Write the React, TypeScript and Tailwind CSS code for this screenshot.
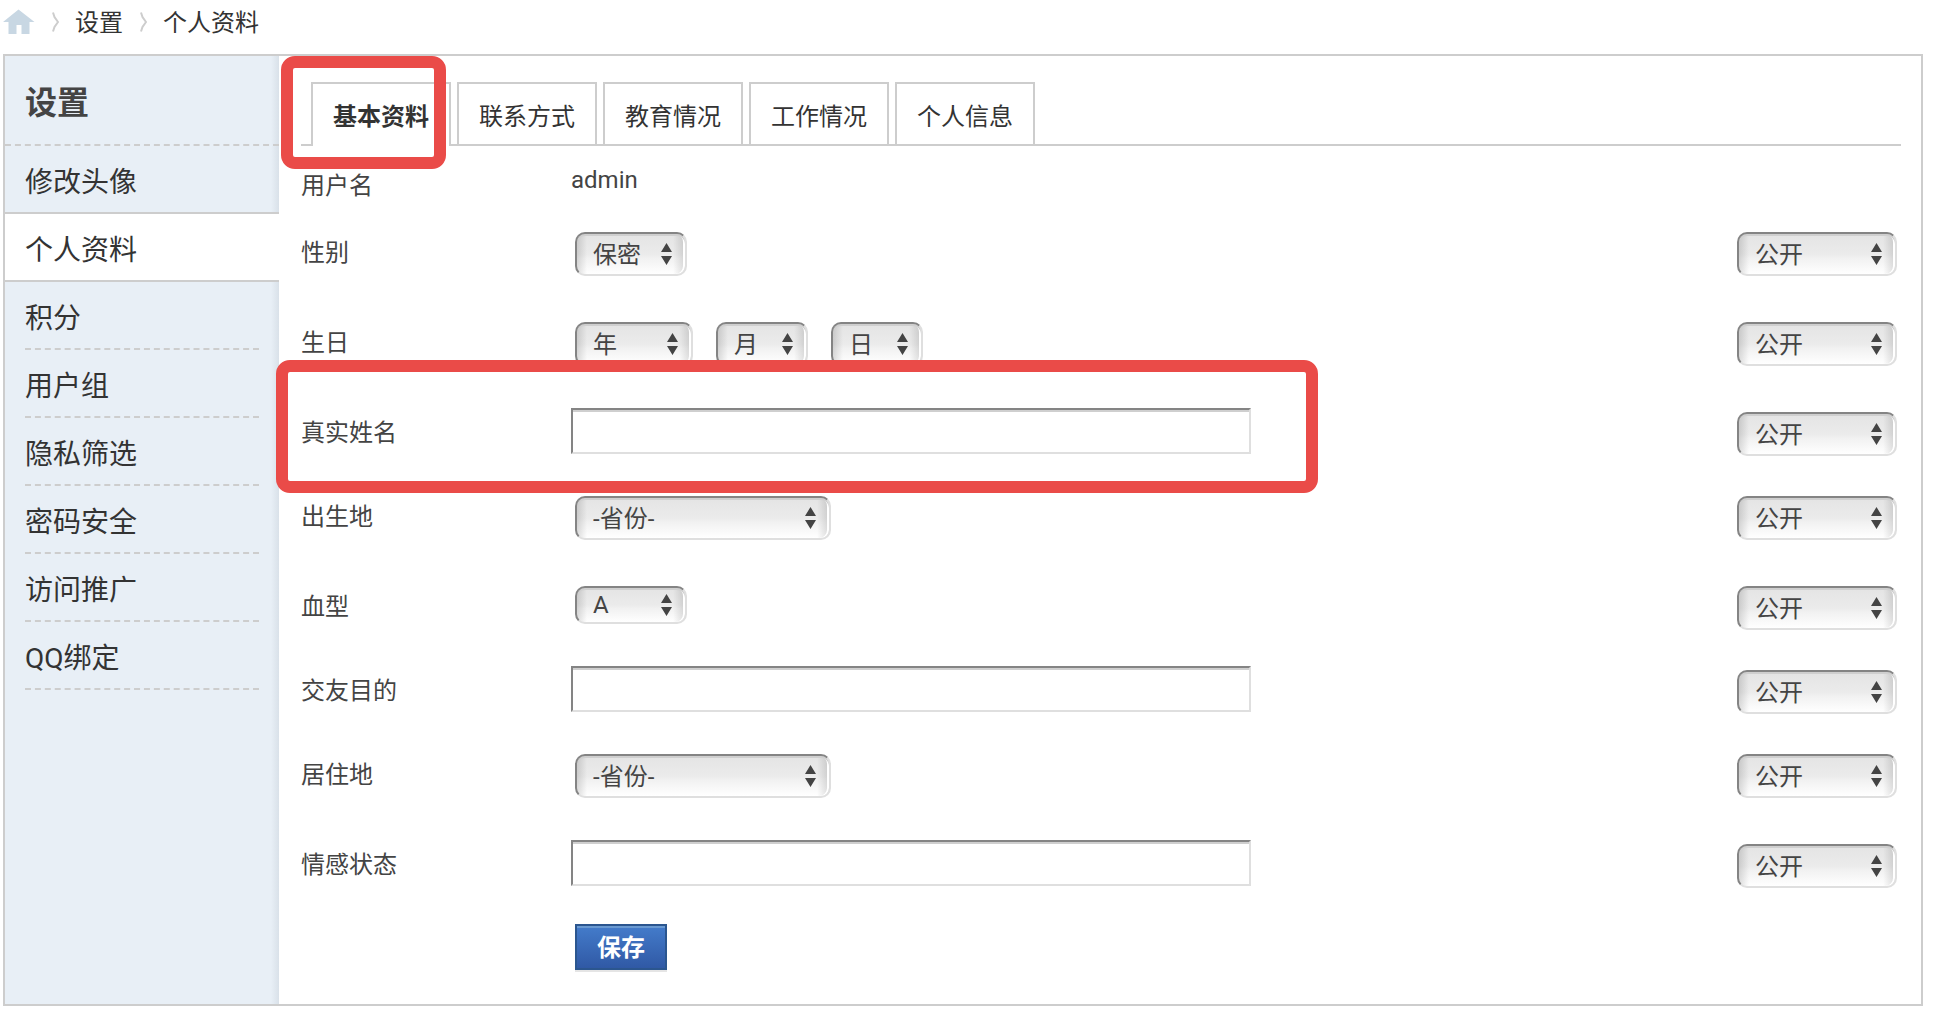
import { ReactElement } from "react"
import clsx from "clsx"

type Row = {
    id: string
    label: string
    tall?: boolean
    highlight?: boolean
    control: ReactElement
}

const menu = ["修改头像", "个人资料", "积分", "用户组", "隐私筛选", "密码安全", "访问推广", "QQ绑定"]
const activeMenu = 1

const tabs = ["基本资料", "联系方式", "教育情况", "工作情况", "个人信息"]

const rows: Row[] = [
    {
        id: "gender",
        label: "性别",
        tall: true,
        control: <Select id="gender" className="w-28" options={["保密", "男", "女"]} />
    },
    {
        id: "birthyear",
        label: "生日",
        tall: true,
        control: (
            <div className="flex gap-[23px]">
                <Select id="birthyear" className="w-[118px]" options={["年"]} />
                <Select id="birthmonth" ariaLabel="月" className="w-[92px]" options={["月"]} />
                <Select id="birthday" ariaLabel="日" className="w-[92px]" options={["日"]} />
            </div>
        )
    },
    { id: "realname", label: "真实姓名", highlight: true, control: <TextInput id="realname" /> },
    {
        id: "birthcity",
        label: "出生地",
        tall: true,
        control: <Select id="birthcity" className="w-64" options={["-省份-"]} />
    },
    {
        id: "bloodtype",
        label: "血型",
        control: <Select id="bloodtype" className="w-28" short options={["A", "B", "AB", "O"]} />
    },
    { id: "lookingfor", label: "交友目的", control: <TextInput id="lookingfor" /> },
    {
        id: "residecity",
        label: "居住地",
        tall: true,
        control: <Select id="residecity" className="w-64" options={["-省份-"]} />
    },
    { id: "affectivestatus", label: "情感状态", control: <TextInput id="affectivestatus" /> }
]

function Select({
    id,
    options,
    className,
    ariaLabel,
    short
}: {
    id: string
    options: string[]
    className: string
    ariaLabel?: string
    short?: boolean
}) {
    return (
        <div className={clsx("relative", className)}>
            <select
                id={id}
                aria-label={ariaLabel}
                className={clsx(
                    "block w-full appearance-none rounded-[10px] border-2 border-t-[#848484] border-l-[#848484] border-r-[#dfdfdf] border-b-[#dfdfdf] pl-4 text-2xl text-[#444] shadow-[inset_0_2px_0_#cfcfcf,inset_-2px_0_0_#fff]",
                    "bg-[linear-gradient(90deg,rgba(0,0,0,0.13),transparent_10px,transparent_calc(100%-12px),rgba(0,0,0,0.13)),linear-gradient(#e4e4e4,#ebebeb_50%,#f1f1f1_60%,#fff)]",
                    short ? "h-[38px]" : "h-11 pt-0.5"
                )}
            >
                {options.map(option => <option key={option}>{option}</option>)}
            </select>
            <svg
                viewBox="0 0 11 22"
                className={clsx("pointer-events-none absolute right-[15px] h-[22px] w-[11px]", short ? "top-2" : "top-[11px]")}
                fill="#444"
            >
                <path d="M5.5 0 11 9H0zM0 13h11L5.5 22z" />
            </svg>
        </div>
    )
}

function TextInput({ id }: { id: string }) {
    return (
        <input
            id={id}
            type="text"
            className="block h-[46px] w-[680px] border-2 border-t-[#848484] border-l-[#848484] border-r-[#dfdfdf] border-b-[#dfdfdf] bg-white px-2 text-2xl shadow-[inset_0_2px_0_#cfcfcf]"
        />
    )
}

function Marker({ className }: { className: string }) {
    return <div className={clsx("pointer-events-none absolute z-10 rounded-[14px] border-12 border-[#ea4b48]", className)} />
}

function Chevron() {
    return (
        <svg viewBox="0 0 8 20" className="h-5 w-2" fill="none" stroke="#cdcdcd" strokeWidth="2">
            <path d="M2 0.5 3.5 5 7 10 3.5 15 2 19.5" />
        </svg>
    )
}

function Breadcrumb() {
    return (
        <nav className="flex h-[54px] items-start gap-4 pt-1 text-[#333]">
            <a href="#" aria-label="首页" className="pt-[5px]">
                <svg viewBox="0 0 32 25" className="h-[25px] w-8" fill="#c8d7e3">
                    <path d="M15.500 0.500 31.500 13H26.500V25H18.500V16H13.500V25H5.500V13H0z" />
                </svg>
            </a>
            <span className="pt-2"><Chevron /></span>
            <a href="#" className="leading-[38px]">设置</a>
            <span className="pt-2"><Chevron /></span>
            <a href="#" className="leading-[38px]">个人资料</a>
        </nav>
    )
}

function Sidebar() {
    return (
        <aside className="w-[274px] shrink-0 bg-[#e8eff6] bg-[linear-gradient(90deg,transparent_calc(100%-8px),#d9e1e9)]">
            <h2 className="h-[90px] border-b-2 border-dashed border-[#cdcdcd] pl-5 text-[32px] leading-[94px] font-bold text-[#444]">
                设置
            </h2>
            <ul className="text-[28px] leading-[74px] text-[#333]">
                {menu.map((item, i) =>
                    <li
                        key={item}
                        className={clsx(
                            "h-[68px] border-b-2 border-[#cdcdcd]",
                            i === activeMenu && "bg-white pl-5",
                            i === activeMenu - 1 && "pl-5",
                            i > activeMenu && "mx-5 border-dashed"
                        )}
                    >
                        <a href="#" className="block">{item}</a>
                    </li>
                )}
            </ul>
        </aside>
    )
}

export default function App() {
    return (
        <div className="pr-[21px] pb-3 pl-[3px] font-[Roboto,'Noto_Sans_CJK_SC',sans-serif] text-2xl text-[#444]">
            <Breadcrumb />
            <div className="flex border-2 border-[#cdcdcd]">
                <Sidebar />
                <main className="relative min-w-0 flex-1 pt-[26px] pr-5 pb-[34px] pl-[22px]">
                    <Marker className="top-0 left-0.5 h-[113px] w-[165px]" />

                    <ul className="flex gap-1.5 border-b-2 border-[#cdcdcd] pl-2.5 text-[#333]">
                        {tabs.map((tab, i) =>
                            <li
                                key={tab}
                                className={clsx(
                                    "border-2 border-b-0 border-[#cdcdcd] bg-white px-5",
                                    i === 0 ? "-mb-0.5 h-16 font-bold" : "h-[62px]"
                                )}
                            >
                                <a href="#" className="block leading-[66px]">{tab}</a>
                            </li>
                        )}
                    </ul>

                    <form>
                        <div className="grid h-[82px] grid-cols-[270px_1fr] pt-[15px]">
                            <span className="leading-[50px]">用户名</span>
                            <span className="leading-[38px]">admin</span>
                        </div>

                        {rows.map(row =>
                            <div
                                key={row.id}
                                className={clsx(
                                    "relative grid grid-cols-[270px_1fr_164px] items-start",
                                    row.tall ? "h-[90px]" : "h-[84px]"
                                )}
                            >
                                <label htmlFor={row.id} className="leading-[50px]">{row.label}</label>
                                {row.control.type === TextInput
                                    ? row.control
                                    : <div className="pt-1 pl-1">{row.control}</div>
                                }
                                <div className="pt-1">
                                    <Select
                                        id={row.id + "-privacy"}
                                        ariaLabel={row.label + "隐私"}
                                        className="w-40"
                                        options={["公开", "好友可见", "保密"]}
                                    />
                                </div>
                                {row.highlight && <Marker className="-top-12 -left-[25px] h-[133px] w-[1042px]" />}
                            </div>
                        )}

                        <button
                            type="submit"
                            className="ml-[274px] block h-[46px] w-[92px] border-2 border-[#2b568f] bg-linear-to-b from-[#447ccb] to-[#3059a5] pt-0.5 leading-10 font-bold text-white shadow-[0_2px_0_#e5e5e5,inset_0_2px_0_#6a9ad2]"
                        >
                            保存
                        </button>
                    </form>
                </main>
            </div>
        </div>
    )
}
